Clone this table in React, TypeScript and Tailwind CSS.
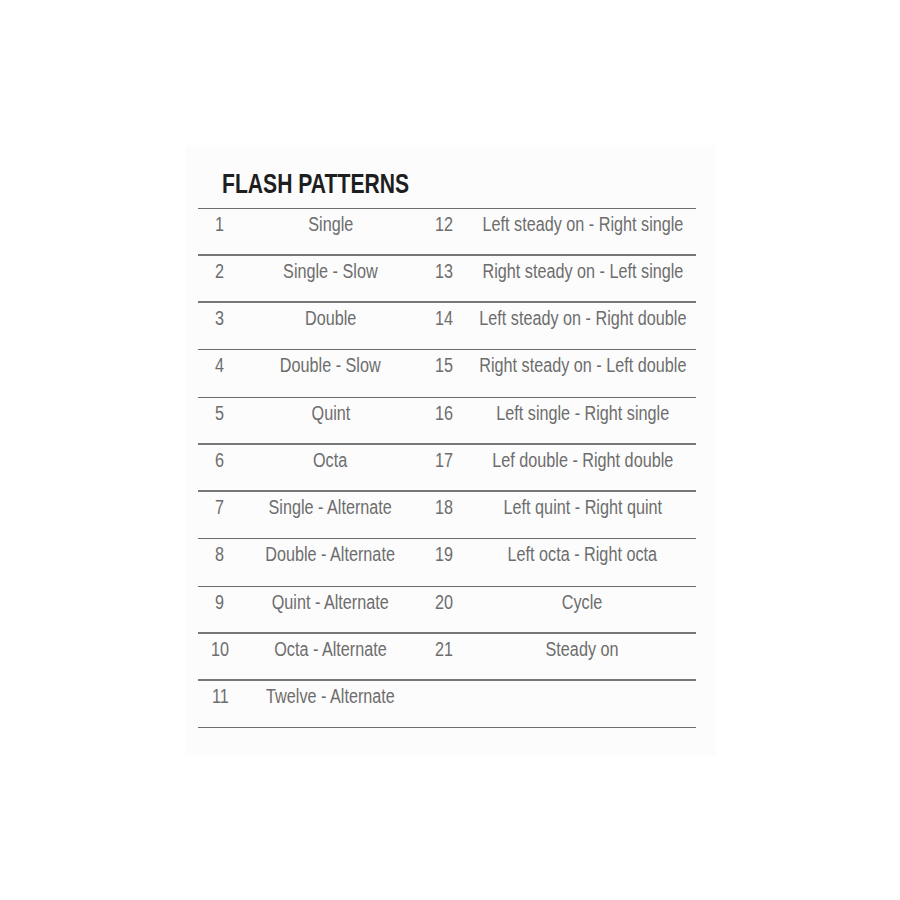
const left = [
  'Single',
  'Single - Slow',
  'Double',
  'Double - Slow',
  'Quint',
  'Octa',
  'Single - Alternate',
  'Double - Alternate',
  'Quint - Alternate',
  'Octa - Alternate',
  'Twelve - Alternate',
];

const right = [
  'Left steady on - Right single',
  'Right steady on - Left single',
  'Left steady on - Right double',
  'Right steady on - Left double',
  'Left single - Right single',
  'Lef double - Right double',
  'Left quint - Right quint',
  'Left octa - Right octa',
  'Cycle',
  'Steady on',
];

// bottom rule weights, as they print in the sheet
const thick = [true, true, false, false, true, true, false, false, true, true, false];

// no narrow face installed, so squeeze Liberation Sans
function Cell({ children }: { children: React.ReactNode }) {
  return (
    <div className="flex justify-center">
      <span className="inline-block whitespace-nowrap scale-x-[0.81]">{children}</span>
    </div>
  );
}

export default function App() {
  return (
    <div className="h-[900px] w-full bg-white flex items-center justify-center font-['Liberation_Sans',Arial,sans-serif]">
      <div className="w-[531px] h-[611px] bg-[#fcfcfc] pl-[13px] pr-[20px] pt-[24px]">
        <div className="h-[39px] pl-[24px]">
          <h1 className="inline-block origin-left scale-x-[0.755] whitespace-nowrap text-[28px] leading-[30px] font-bold text-[#1e1e1e]">
            FLASH PATTERNS
          </h1>
        </div>
        <div className="border-t border-[#6e6e6e]">
          {left.map((name, i) => (
            <div
              key={i}
              className={`grid grid-cols-[45px_176px_51px_226px] h-[47.27px] pt-[3px] text-[20px] leading-6 text-[#6d6d6d] ${
                thick[i] ? 'border-b-2 border-[#777777]' : 'border-b border-[#6e6e6e]'
              }`}
            >
              <Cell>{i + 1}</Cell>
              <Cell>{name}</Cell>
              <Cell>{right[i] ? i + 12 : ''}</Cell>
              <Cell>{right[i] ?? ''}</Cell>
            </div>
          ))}
        </div>
      </div>
    </div>
  );
}
